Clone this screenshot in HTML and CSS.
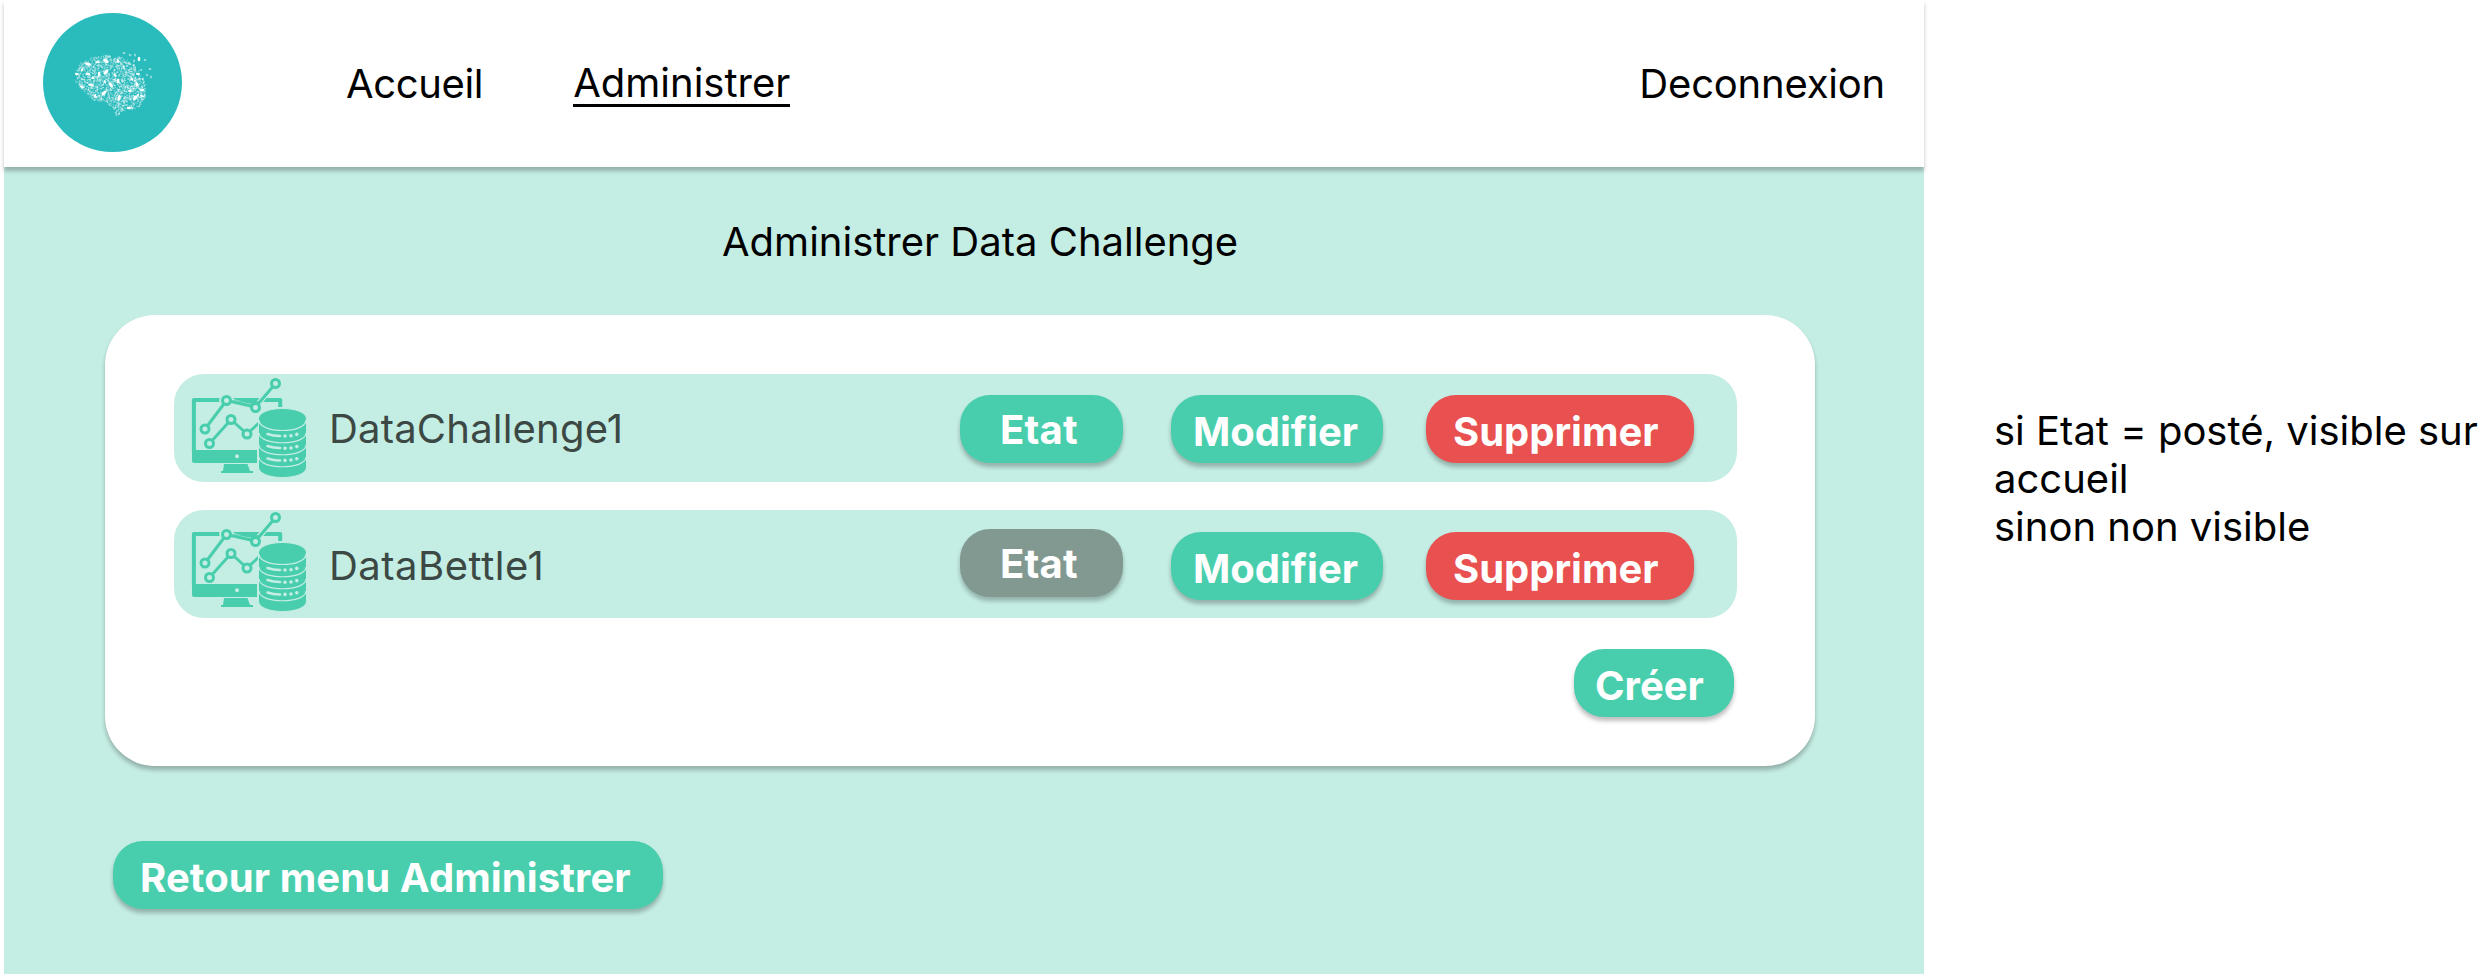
FILE: index.html
```html
<!DOCTYPE html>
<html lang="fr">
<head>
<meta charset="utf-8">
<title>Administrer Data Challenge</title>
<link rel="stylesheet" href="styles.css">
</head>
<body>
<svg class="defs" aria-hidden="true">
  <symbol id="data-icon" viewBox="0 0 140 115">
    <g fill="none" stroke="#49cead">
      <path d="M13.900 82V30H100.200V37" stroke-width="4" stroke-linejoin="round"/>
    </g>
    <path d="M12 80H77V93H14Q12 93 12 91ZM44 94H67.500L70 101H73V103H41V101H43Z" fill="#49cead"/>
    <circle cx="57" cy="86.200" r="2" fill="#c4ede3"/>
    <g fill="none" stroke="#c4ede3" stroke-width="5.500">
      <path d="M46.500 30.500L75.500 37L95 13.500"/>
      <circle cx="46.500" cy="30.500" r="4.500"/>
    </g>
    <path d="M49 30L75 31.200H82L76 37Z" fill="#49cead"/>
    <path d="M51 30.400L75 35" fill="none" stroke="#c4ede3" stroke-width=".8"/>
    <g fill="none" stroke="#49cead" stroke-width="3">
      <path d="M25 59L46.500 30.500L75.500 37L95.500 13.500M29.500 73.500L51 49.500L67 64L79 53"/>
    </g>
    <g fill="#c4ede3" stroke="#49cead" stroke-width="3">
      <circle cx="25" cy="59" r="4"/><circle cx="46.500" cy="30.500" r="4"/><circle cx="75.500" cy="37.500" r="4"/><circle cx="95.500" cy="13.500" r="4"/>
      <circle cx="29.500" cy="73.500" r="4"/><circle cx="51" cy="49.500" r="4"/><circle cx="67" cy="64" r="4"/>
    </g>
    <path d="M78.500 49C78.500 35 126.500 35 126.500 49V97C126.500 111 78.500 111 78.500 97Z" fill="#49cead" stroke="#c4ede3" stroke-width="1"/>
    <g fill="none" stroke="#c4ede3" stroke-width="1.200">
      <path d="M79 50C79 64 126 64 126 50M79 63C79 76 126 76 126 63M79 75C79 88 126 88 126 75M79 87C79 100 126 100 126 87"/>
    </g>
    <g fill="none" stroke="#c4ede3" stroke-width="2.600" stroke-linecap="round">
      <path d="M87.500 64Q93 66 100 66M87.500 76Q93 78 100 78M87.500 88.500Q93 90.500 100 90.500"/>
      <path d="M105 66h.01M111 65.800h.01M116.800 64.400h.01M105 78.200h.01M111 78h.01M116.800 76.600h.01M105 90.400h.01M111 90h.01M116.800 88.800h.01" stroke-width="3.600"/>
    </g>
  </symbol>
</svg>
<div class="page">
  <div class="app">
    <header class="header">
      <svg class="logo" viewBox="0 0 139 139"><circle cx="69.500" cy="69.500" r="69.500" fill="#2abbbd"/><g id="brain" fill="#fff"></g></svg>
      <nav class="nav">
        <a class="nav-home">Accueil</a>
        <a class="nav-admin">Administrer</a>
      </nav>
      <a class="logout">Deconnexion</a>
    </header>
    <main class="main">
      <h1 class="title">Administrer Data Challenge</h1>
      <section class="card">
        <div class="row">
          <svg class="icon"><use href="#data-icon"/></svg>
          <span class="name">DataChallenge1</span>
          <button class="btn state">Etat</button>
          <button class="btn edit">Modifier</button>
          <button class="btn delete">Supprimer</button>
        </div>
        <div class="row second">
          <svg class="icon"><use href="#data-icon"/></svg>
          <span class="name">DataBettle1</span>
          <button class="btn state off">Etat</button>
          <button class="btn edit">Modifier</button>
          <button class="btn delete">Supprimer</button>
        </div>
        <button class="btn create">Créer</button>
      </section>
      <button class="btn back">Retour menu Administrer</button>
    </main>
  </div>
  <aside class="note">si Etat = posté, visible sur accueil<br>sinon non visible</aside>
</div>
<script src="brain.js"></script>
</body>
</html>
```
FILE: styles.css
```css
* { box-sizing: border-box; }
body {
  margin: 0;
  background: #fff;
  color: #000;
  font: 400 40px/48px Inter, "Liberation Sans", sans-serif;
}
.defs { display: none; }
.page { display: flex; height: 974px; overflow: hidden; }
.app { width: 1920px; margin-left: 4px; flex: none; display: flex; flex-direction: column; }
.header {
  height: 167px;
  flex: none;
  display: flex;
  align-items: flex-start;
  padding: 13px 39px 0 39px;
  background: #fff;
  box-shadow: 0 4px 4px rgba(0, 0, 0, .25);
  z-index: 1;
}
.logo { width: 139px; height: 139px; }
.nav { display: flex; align-items: flex-start; gap: 90px; margin: 47px auto 0 164px; }
.nav-home { letter-spacing: -.35px; }
.nav-admin { height: 48px; margin-top: -1px; border-bottom: 3px solid #000; }
.logout { margin-top: 47px; letter-spacing: -.2px; }
.main {
  flex: 1;
  display: flex;
  flex-direction: column;
  align-items: flex-start;
  padding: 51px 109px 0 101px;
  background: #c4ede3;
}
.title { margin: 0 0 49px 617px; font: inherit; white-space: nowrap; }
.card {
  width: 1710px;
  height: 451px;
  display: flex;
  flex-direction: column;
  padding: 59px 78px 0 69px;
  border-radius: 50px;
  background: #fff;
  box-shadow: 0 4px 4px rgba(0, 0, 0, .25);
}
.row {
  height: 108px;
  display: flex;
  align-items: flex-start;
  padding: 21px 43px 0 6px;
  margin-bottom: 28px;
  border-radius: 30px;
  background: #c4ede3;
}
.second { margin-bottom: 31px; padding-top: 22px; }
.icon { width: 140px; height: 115px; flex: none; margin: -25px 0 0; }
.second .icon { margin-top: -28px; }
.name { margin: 10px auto 0 9px; color: #3b4844; letter-spacing: .2px; }
.second .name { letter-spacing: .5px; }
.btn {
  height: 68px;
  flex: none;
  border: 0;
  border-radius: 30px;
  padding: 13px 0 7px 24px;
  background: #49cead;
  color: #fff;
  font: 700 40px/48px Inter, "Liberation Sans", sans-serif;
  text-align: left;
  white-space: nowrap;
  box-shadow: 0 4px 4px rgba(0, 0, 0, .25);
}
.state { width: 163px; padding: 11px 0 9px 40px; margin-right: 48px; letter-spacing: .2px; }
.off { background: #829992; margin-top: -3px; }
.edit { width: 212px; padding-left: 22px; margin-right: 43px; }
.delete { width: 268px; padding-left: 27px; background: #e95050; }
.create { width: 160px; align-self: flex-end; margin-right: 3px; padding-left: 21px; }
.back { width: 550px; margin: 75px 0 0 8px; padding-left: 27px; letter-spacing: .1px; }
.note { width: 490px; margin: 407px 0 0 70px; }
```
FILE: brain.js
```js
// Speckled brain drawn inside the logo, from a fixed seed so it is stable.
const outline = [[31,60],[38,50],[50,44],[65,42],[80,44],[92,52],[98,62],[103,72],[103,84],[95,95],[87,97],[79,98],[74,104],[70,95],[62,89],[50,87],[40,78],[32,68]];
let seed = 7;
const rnd = () => (seed = (seed * 16807) % 2147483647) / 2147483647;
const inside = (x, y) => outline.reduce((hit, [ax, ay], i) => {
  const [bx, by] = outline[(i + 1) % outline.length];
  return (ay > y) !== (by > y) && x < (bx - ax) * (y - ay) / (by - ay) + ax ? !hit : hit;
}, false);
const speck = (x, y, rx, ry, angle, opacity) =>
  `<ellipse cx="${x}" cy="${y}" rx="${rx}" ry="${ry}" transform="rotate(${angle} ${x} ${y})" opacity="${opacity}"/>`;
let out = '';
for (let i = 0; i < 2300; i++) {
  const x = 30 + rnd() * 75, y = 41 + rnd() * 63;
  if (inside(x, y)) out += speck(x, y, .5 + rnd() * .9, .4 + rnd() * .35, rnd() * 180, .25 + rnd() * .3);
}
const bright = [[34,61,2.2,1,0],[45,51,3,1.500,15],[55,49,2,1,20],[63,48,3,1.600,30],[75,48,2,1.300,70],[45,61,2.500,1.300,20],[56,61,2.400,1.200,100],[63,59,3,1.700,130],[72,62,2,1,60],[75,68,2.500,1.400,100],[68,72,3,1.500,60],[48,72,3,1.300,15],[39,57,2,1,120],[39,74,2.200,1.100,30],[61,80,3,1.500,140],[76,85,3,1.600,95],[92,85,2.800,1.600,120],[94,71,2.500,1.300,60],[95,61,2.200,1,0],[96,46,2.200,1.300,90],[99,77,2.500,1,0],[99,83,2,1.200,30],[86,95,2.200,1.300,0],[52,83,2,1,110],[89,66,2,1,60],[50,65,1.800,1,10],[62,69,1.800,1,70],[87,78,2,1,10],[95,82,1.600,1,110]];
bright.forEach(([x, y, rx, ry, a]) => { out += speck(x, y, rx, ry, a, 1); });
[[81,40],[87,42],[92,42],[91,48],[102,47],[87,51],[83,50],[80,53],[92,57],[98,57],[107,56],[104,62],[108,64],[100,66],[86,57],[90,62]].forEach(([x, y], i) => { out += speck(x, y, 1.5, .9, i * 37, .55); });
document.getElementById('brain').innerHTML = out;
```
